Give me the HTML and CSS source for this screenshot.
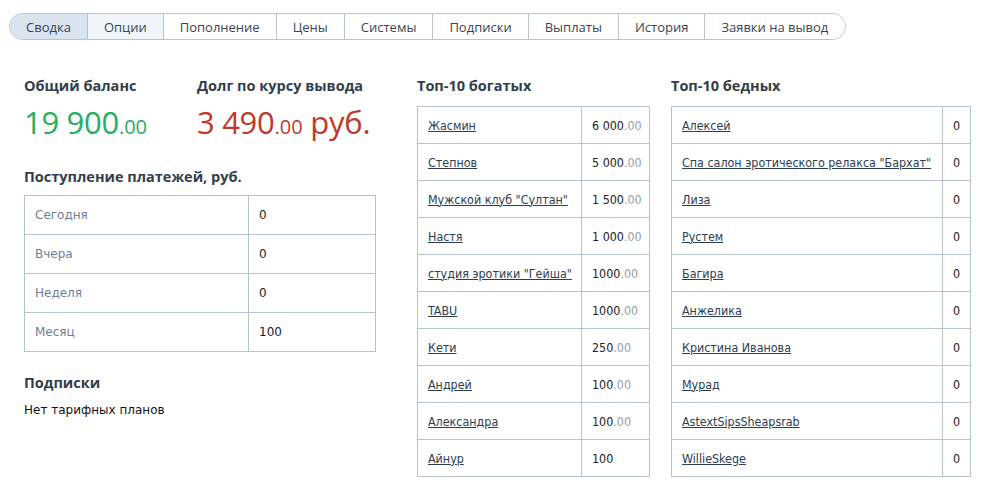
FILE: index.html
```html
<!DOCTYPE html>
<html lang="ru">
<head>
<meta charset="utf-8">
<title>Сводка</title>
<link rel="stylesheet" href="styles.css">
</head>
<body>
<nav class="tabs">
  <a class="tab active">Сводка</a>
  <a class="tab hover">Опции</a>
  <a class="tab">Пополнение</a>
  <a class="tab">Цены</a>
  <a class="tab">Системы</a>
  <a class="tab">Подписки</a>
  <a class="tab">Выплаты</a>
  <a class="tab">История</a>
  <a class="tab">Заявки на вывод</a>
</nav>
<main class="content">
  <section class="col col-main">
    <div class="balances">
      <div class="balance">
        <h3 class="h">Общий баланс</h3>
        <div class="big green">19 900<small>.00</small></div>
      </div>
      <div class="balance">
        <h3 class="h">Долг по курсу вывода</h3>
        <div class="big red">3 490<small>.00</small> руб.</div>
      </div>
    </div>
    <h3 class="h h-pay">Поступление платежей, руб.</h3>
    <table class="grid pay">
      <tr><td class="lbl">Сегодня</td><td>0</td></tr>
      <tr><td class="lbl">Вчера</td><td>0</td></tr>
      <tr><td class="lbl">Неделя</td><td>0</td></tr>
      <tr><td class="lbl">Месяц</td><td>100</td></tr>
    </table>
    <h3 class="h h-subs">Подписки</h3>
    <p class="note">Нет тарифных планов</p>
  </section>
  <section class="col col-rich">
    <h3 class="h">Топ-10 богатых</h3>
    <table class="grid top rich">
      <tr><td><a href="#">Жасмин</a></td><td>6 000<span class="dec">.00</span></td></tr>
      <tr><td><a href="#">Степнов</a></td><td>5 000<span class="dec">.00</span></td></tr>
      <tr><td><a href="#">Мужской клуб "Султан"</a></td><td>1 500<span class="dec">.00</span></td></tr>
      <tr><td><a href="#">Настя</a></td><td>1 000<span class="dec">.00</span></td></tr>
      <tr><td><a href="#">студия эротики "Гейша"</a></td><td>1000<span class="dec">.00</span></td></tr>
      <tr><td><a href="#">TABU</a></td><td>1000<span class="dec">.00</span></td></tr>
      <tr><td><a href="#">Кети</a></td><td>250<span class="dec">.00</span></td></tr>
      <tr><td><a href="#">Андрей</a></td><td>100<span class="dec">.00</span></td></tr>
      <tr><td><a href="#">Александра</a></td><td>100<span class="dec">.00</span></td></tr>
      <tr><td><a href="#">Айнур</a></td><td>100</td></tr>
    </table>
  </section>
  <section class="col col-poor">
    <h3 class="h">Топ-10 бедных</h3>
    <table class="grid top poor">
      <tr><td><a href="#">Алексей</a></td><td>0</td></tr>
      <tr><td><a href="#">Спа салон эротического релакса "Бархат"</a></td><td>0</td></tr>
      <tr><td><a href="#">Лиза</a></td><td>0</td></tr>
      <tr><td><a href="#">Рустем</a></td><td>0</td></tr>
      <tr><td><a href="#">Багира</a></td><td>0</td></tr>
      <tr><td><a href="#">Анжелика</a></td><td>0</td></tr>
      <tr><td><a href="#">Кристина Иванова</a></td><td>0</td></tr>
      <tr><td><a href="#">Мурад</a></td><td>0</td></tr>
      <tr><td><a href="#">AstextSipsSheapsrab</a></td><td>0</td></tr>
      <tr><td><a href="#">WillieSkege</a></td><td>0</td></tr>
    </table>
  </section>
</main>
</body>
</html>
```
FILE: styles.css
```css
* { box-sizing: border-box; }
html, body { margin: 0; padding: 0; background: #fff; }
body {
  font-family: "DejaVu Sans", Tahoma, sans-serif;
  font-size: 12px;
  color: #222;
}

.tabs {
  display: inline-flex;
  margin: 13px 0 0 9px;
  height: 27px;
  border: 1px solid #b7c3cd;
  border-radius: 14px;
  overflow: hidden;
  font-family: "Open Sans", sans-serif;
  font-size: 13px;
}
.tab {
  display: flex;
  align-items: center;
  padding: 0 16px;
  color: #3a4552;
  border-left: 1px solid #b7c3cd;
  background: #fff;
}
.tab:first-child { border-left: 0; padding-left: 16px; }
.tab:last-child { padding-right: 17px; }
.tab.active { background: #d8e4ef; }
.tab.hover { background: #eff5fa; }

.content {
  display: flex;
  align-items: flex-start;
  padding: 0 0 0 24px;
  margin-top: 36px;
}
.col-main { width: 352px; margin-right: 41px; }
.col-rich { width: 233px; margin-right: 21px; }
.col-poor { width: 300px; }

.h {
  margin: 0;
  font-family: "Open Sans", sans-serif;
  font-weight: 700;
  font-size: 14.5px;
  line-height: 20px;
  color: #323e4b;
}

.balances { display: flex; }
.balance:first-child { width: 173px; }
.big {
  font-family: "Open Sans", sans-serif;
  font-size: 31px;
  line-height: 40px;
  margin-top: 6px;
  letter-spacing: -0.3px;
}
.big small { font-size: 20px; letter-spacing: 0; }
.green { color: #27ae60; }
.red { color: #c0392b; }

.h-pay { margin-top: 20px; }

.grid {
  border-collapse: collapse;
  width: 100%;
  table-layout: fixed;
}
.grid td {
  border: 1px solid #b4c3cf;
  padding: 0 10px;
  white-space: nowrap;
}
.pay { margin-top: 8px; }
.pay td { height: 39px; color: #222; }
.pay td.lbl { width: 224px; color: #6e7e94; }

.h-subs { margin-top: 21px; }
.note { margin: 8px 0 0; color: #111; line-height: 18px; }

.top {
  margin-top: 10px;
  font-family: "DejaVu Sans Condensed", "DejaVu Sans", sans-serif;
  font-size: 12.4px;
}
.top td { height: 37px; }
.rich td:first-child { width: 164px; }
.poor td:last-child { width: 28px; }
.top a { color: #2c3e50; text-decoration: underline; }
.dec { color: #95a0a8; }
```
